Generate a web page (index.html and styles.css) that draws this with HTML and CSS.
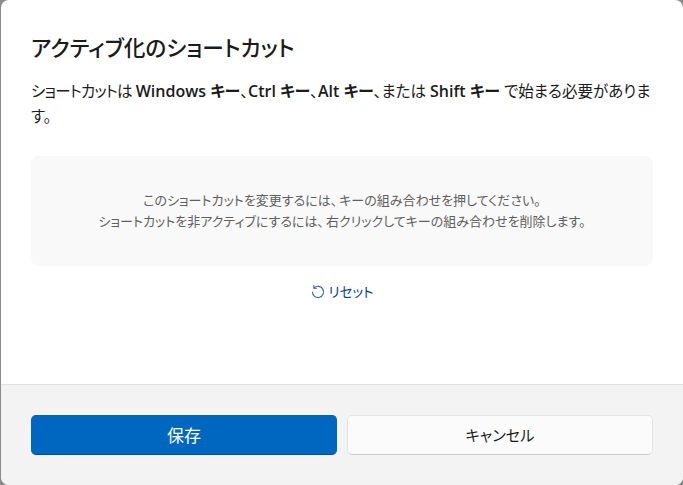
FILE: index.html
```html
<!DOCTYPE html>
<html lang="ja">
<head>
    <meta charset="UTF-8">
    <meta name="viewport" content="width=device-width, initial-scale=1.0">
    <title>アクティブ化のショートカット</title>
    <link rel="stylesheet" href="styles.css">
</head>
<body>
    <div class="dialog">
        <div class="content">
            <h1>アクティブ化のショートカット</h1>
            <p class="message"><span class="lead">ショートカットは</span> <b>Windows キー</b>、<b>Ctrl キー</b>、<b>Alt キー</b>、または <b>Shift キー</b> で始まる必要があります。</p>

            <div class="key-panel">
                <p>このショートカットを変更するには<span class="comma">、</span>キーの組み合わせを押してください。</p>
                <p>ショートカットを非アクティブにするには<span class="comma">、</span>右クリックしてキーの組み合わせを削除します。</p>
            </div>

            <div class="reset-row">
                <button class="reset-btn">
                    <svg class="reset-icon" width="14" height="14" viewBox="0 0 14 14" fill="none">
                        <path d="M3.1 2.9A5.6 5.6 0 1 1 1.4 7" stroke="#2f63ab" stroke-width="1.1" stroke-linecap="round"/>
                        <path d="M2.9 0.6V3.2H5.6" stroke="#2f63ab" stroke-width="1.1" stroke-linecap="round" stroke-linejoin="round"/>
                    </svg>
                    <span>リセット</span>
                </button>
            </div>
        </div>

        <div class="footer">
            <button class="save-btn">保存</button>
            <button class="cancel-btn">キャンセル</button>
        </div>
    </div>
</body>
</html>
```

FILE: styles.css
```css
html, body {
    height: 100%;
}

body {
    margin: 0;
    background-color: #8c8c8c;
    font-family: "Open Sans", "Noto Sans CJK JP", sans-serif;
    font-feature-settings: "palt";
    color: #1b1b1b;
}

.dialog {
    display: flex;
    flex-direction: column;
    box-sizing: border-box;
    height: 485px;
    margin-left: 1px;
    background-color: white;
    border-radius: 8px;
    overflow: hidden;
}

.content {
    flex: 1;
    padding: 33px 30px 0;
}

h1 {
    margin: 0;
    font-size: 21.7px;
    line-height: 30px;
    font-weight: 500;
}

.message {
    margin: 16px 0 0;
    font-size: 15.5px;
    line-height: 25px;
}

.message b {
    font-size: 16px;
    font-weight: 600;
}

.lead {
    letter-spacing: -0.8px;
}

.comma {
    margin-right: 2px;
}

.key-panel {
    display: flex;
    flex-direction: column;
    justify-content: center;
    height: 110px;
    margin-top: 27px;
    background-color: #f9f9f9;
    border-radius: 8px;
    text-align: center;
    font-size: 13px;
    line-height: 21px;
    color: #5f5f5f;
}

.key-panel p {
    margin: 0;
}

.reset-row {
    display: flex;
    justify-content: center;
    margin-top: 16px;
}

.reset-btn {
    display: flex;
    align-items: center;
    gap: 4px;
    padding: 0;
    border: none;
    background: none;
    font: inherit;
    font-feature-settings: inherit;
    font-size: 13.5px;
    line-height: 20px;
    color: #003e92;
}

.footer {
    display: flex;
    gap: 10px;
    height: 101px;
    box-sizing: border-box;
    padding: 30px 30px 0;
    background-color: #f3f3f3;
    border-top: 1px solid #e1e1e1;
}

.save-btn, .cancel-btn {
    flex: 1;
    height: 40px;
    box-sizing: border-box;
    padding: 0 0 2px;
    border-radius: 5px;
    font: inherit;
    font-feature-settings: inherit;
}

.save-btn {
    border: 1px solid #0067c0;
    border-bottom-color: #004a8f;
    background-color: #0067c0;
    font-size: 17px;
    color: white;
}

.cancel-btn {
    border: 1px solid #e5e5e5;
    border-bottom-color: #cccccc;
    background-color: #fbfbfb;
    font-size: 15.2px;
    color: #1b1b1b;
}
```
